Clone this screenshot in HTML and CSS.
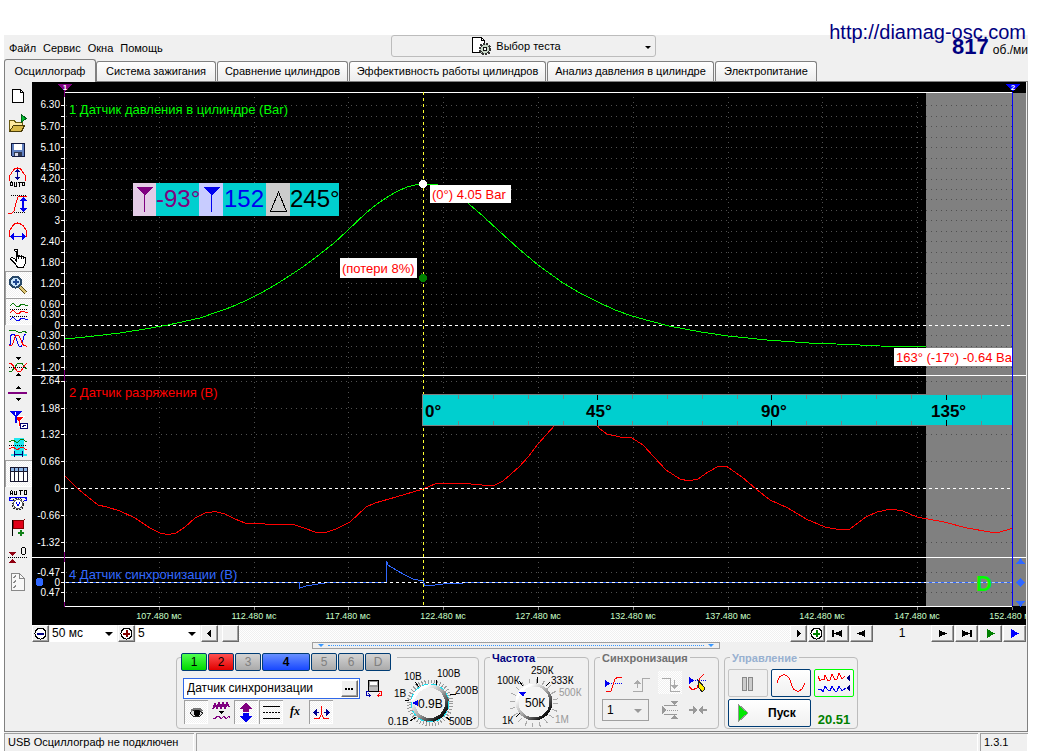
FILE: index.html
```html
<!DOCTYPE html>
<html lang="ru">
<head>
<meta charset="utf-8">
<title>Осциллограф</title>
<link rel="stylesheet" href="styles.css">
</head>
<body>
<div class="app">
  <a class="site-link" href="#">http://diamag-osc.com</a>
  <header class="header">
    <nav class="menu">
      <a href="#">Файл</a><a href="#">Сервис</a><a href="#">Окна</a><a href="#">Помощь</a>
    </nav>
    <button class="test-picker">
      <svg width="21" height="20" viewBox="0 0 21 20"><path d="M1.500 1.500h9l3 3v12h-12z" fill="#fff" stroke="#000"/><path d="M10.500 1.500v3h3" fill="none" stroke="#000"/><circle cx="14" cy="13" r="5" fill="#b8ccb8" stroke="#333" stroke-width="3" stroke-dasharray="2 1"/><circle cx="14" cy="13" r="4" fill="#c8d8c8"/><circle cx="14" cy="13" r="2" fill="#fff" stroke="#111"/></svg>
      <span>Выбор теста</span><i class="caret"></i>
    </button>
    <div class="rpm"><b>817</b><span>об./ми</span></div>
  </header>

  <div class="tabs" role="tablist">
    <button class="tab tab-active" role="tab">Осциллограф</button>
    <button class="tab tab-w120" role="tab">Система зажигания</button>
    <button class="tab tab-w130" role="tab">Сравнение цилиндров</button>
    <button class="tab tab-w197" role="tab">Эффективность работы цилиндров</button>
    <button class="tab tab-w167" role="tab">Анализ давления в цилиндре</button>
    <button class="tab tab-w102" role="tab">Электропитание</button>
  </div>

  <main class="page">
    <div class="workspace">
      <aside class="tools">
        <button aria-label="Новый"><svg viewBox="0 0 24 24"><path d="M6.500 5.500h8l3 3v10h-11z" fill="#fff" stroke="#000"/><path d="M14.500 5.500v3h3" fill="none" stroke="#000"/></svg></button>
        <button aria-label="Открыть"><svg viewBox="0 0 24 24"><path d="M3.500 20.500v-11h5l1 2h7v3" fill="#ffe9a0" stroke="#6b5a10"/><path d="M3.500 20.500l4-6h11l-3 6z" fill="#d8b848" stroke="#4a3c08"/><path d="M15 3l5 4.500-5 4.500z" fill="#00c030" stroke="#006018"/></svg></button>
        <button aria-label="Сохранить"><svg viewBox="0 0 24 24"><path d="M5.500 5.500h13v13h-12l-1-1z" fill="#6080c0" stroke="#101840"/><path d="M8 6h8v6H8z" fill="#fff"/><path d="M8 14h8v4H8z" fill="#303850"/><path d="M9 15h3v3H9z" fill="#d8d8e8"/></svg></button>
        <button aria-label="Авто по вертикали"><svg viewBox="0 0 24 24"><path d="M3.500 16v-5l2-3 3-4 3-1 3 1 3 4 2 3v5" fill="none" stroke="red" stroke-width="1"/><path d="M11.500 5v9" stroke="#000090"/><path d="M9 7l2.500-3L14 7zM9 12l2.500 3 2.500-3z" fill="#000090"/><path d="M4.500 21v-3l1-1 1 1v3m-2-1h2m2-3v4h2v-4m1 .5h4m-2 0v4m3-4h2v3h-2z" fill="none" stroke="#000"/></svg></button>
        <button aria-label="Масштаб по вертикали"><svg viewBox="0 0 24 24"><path d="M2 21h4l2-2 2-8 2-6 3-1 6 1" fill="none" stroke="red"/><path d="M5 3.500h15M8 20.500h12" stroke="#000" stroke-dasharray="1 1"/><path d="M17 7v10" stroke="#0000f0" stroke-width="2"/><path d="M13 9l4-4 4 4zM13 16l4 4 4-4z" fill="#0000f0"/></svg></button>
        <button aria-label="Масштаб по горизонтали"><svg viewBox="0 0 24 24"><path d="M3.500 18V12l3-5 2-2 3-1 3 1 3 2 3 5v6" fill="none" stroke="red"/><path d="M6 17.500h12" stroke="#0000f0"/><path d="M8 14l-4 3.500L8 21zM16 14l4 3.500-4 3.500z" fill="#0000f0"/></svg></button>
        <button aria-label="Рука"><svg viewBox="0 0 24 24"><path d="M10.500 14V4.500h-1l-1-1V3l1-1h1l1 1V9l1-.5 2 1 1-.5 2 1 2 1v5l-2 4h-6l-3-4-4-4 1-1.500 3 1z" transform="translate(0 1)" fill="#fff" stroke="#000"/><path d="M12.500 10v3m2.500-3v3m2.500-2v2" stroke="#000"/></svg></button>
        <button class="pressed" aria-label="Лупа"><svg viewBox="0 0 24 24"><path d="M13 13l7 7" stroke="#5a4a10" stroke-width="4"/><path d="M14 14l6 6" stroke="#e0c878" stroke-width="2"/><circle cx="9.500" cy="9" r="5.500" fill="#c8e4fa" stroke="#284868" stroke-width="2"/><path d="M6.500 9h6M9.500 6v6" stroke="#204890" stroke-width="2"/></svg></button>
        <button class="pressed" aria-label="Раздельно"><svg viewBox="0 0 24 24"><path d="M4 6c2-3 4-3 6 0 3 3 4-2 6-2s3 2 6 2" fill="none" stroke="#087808"/><path d="M4 13c2-3 4-3 6 0 3 3 4-2 6-2s3 2 6 2" fill="none" stroke="red"/><path d="M4 20c2-3 4-3 6 0 3 3 4-2 6-2s3 2 6 2" fill="none" stroke="#0000f0"/><path d="M4 9.500h18M4 16.500h18" stroke="#000" stroke-dasharray="1 1"/></svg></button>
        <button aria-label="Наложение"><svg viewBox="0 0 24 24"><path d="M3 4c3 0 3-1 5-1 3 0 5 5 8 2 2-1 4 0 5 1" fill="none" stroke="#087808"/><path d="M4 19c0-6 0-12 3-12 4 0 4 13 7 13 4 0 2-13 6-13" fill="none" stroke="#0000f0"/><path d="M3 18c6 3 4-10 8-10 5 0 3 12 10 11" fill="none" stroke="red"/></svg></button>
        <button aria-label="Центрировать"><svg viewBox="0 0 24 24"><path d="M3 17h3l6-8h4l3 5 2 1" fill="none" stroke="#087808"/><path d="M3 9h2l6 8h4l4-6 2-2" fill="none" stroke="red"/><path d="M3 13.500h18" stroke="#000" stroke-dasharray="1 1"/><path d="M9 3h6l-3 3zM9 22h6l-3-3z" fill="#000"/></svg></button>
        <button aria-label="Разделитель"><svg viewBox="0 0 24 24"><path d="M2 12h19" stroke="#800080" stroke-width="2"/><path d="M9 8h6l-3-3zM9 17h6l-3 3z" fill="#000"/></svg></button>
        <button aria-label="Маркеры"><svg viewBox="0 0 24 24"><path d="M8 8h11l-5 5v5h-2v-5z" fill="red" stroke="#fff"/><path d="M3 3h13l-5 5v7H9V8z" fill="#0000f0"/><path d="M9.500 4v3" stroke="#fff"/><path d="M14.500 15.500h7v5h-7z" fill="#fff" stroke="#000070"/><path d="M16 18.500h1l1-1h2" stroke="#000070" fill="none"/></svg></button>
        <button aria-label="Область"><svg viewBox="0 0 24 24"><path d="M8 3h10v16h3v2H5v-2h3z" fill="#20e8f0"/><path d="M3 7c3-2 5-2 7 0s4-3 6-3 3 3 5 3" fill="none" stroke="#087808"/><path d="M3 10.500h18" stroke="#000" stroke-dasharray="1 1"/><path d="M3 14c3-2 5-2 7 0s4-2 6-2 3 3 5 3" fill="none" stroke="red"/><path d="M8.500 16v6m8-6v6m-8-3h8" stroke="#000070" stroke-width="1" fill="none"/></svg></button>
        <button class="pressed" aria-label="Таблица"><svg viewBox="0 0 24 24"><path d="M4.500 5.500h17v14h-17z" fill="#fff" stroke="#181830"/><path d="M5 6h16v3H5z" fill="#90b8e8"/><path d="M4 9.500h17M8.500 6v13m4-13v13m5-13v13" stroke="#181830"/></svg></button>
        <button aria-label="Авто вольтметр"><svg viewBox="0 0 24 24"><path d="M4.500 6V2.500l1-1 1 1V6m-2-1.500h2m2-3v4h2v-4m2 0h4m-2 0v4m4-4h2v4h-2z" fill="none" stroke="#000"/><path d="M3 10l3-2h12l3 2M3.500 8v3h3m14-3v3h-3" fill="none" stroke="#0000f0"/><circle cx="12" cy="15" r="6" fill="#eee" stroke="#222" stroke-dasharray="2 1"/><circle cx="12" cy="15" r="4.500" fill="#fff" stroke="#555"/><path d="M10 13l2 4 2-4" fill="none" stroke="#0000f0"/></svg></button>
        <button aria-label="Флаг"><svg viewBox="0 0 24 24"><path d="M6.500 4v16" stroke="#000"/><path d="M7 5l4-1 3 1 4-1-1 3 1 5-4 1-3-1-4 1z" fill="#e00018" stroke="#800000"/><path d="M12 17h6M15 14v6" stroke="#108018" stroke-width="2"/></svg></button>
        <button aria-label="Ноль"><svg viewBox="0 0 24 24"><path d="M3 9h7l-3.500 4zM3 20h7l-3.500-4z" fill="#900010"/><path d="M2 14.500h20" stroke="#000" stroke-dasharray="1 1"/><path d="M16.500 4.500h2l1 1v5l-1 1h-2l-1-1v-5z" fill="none" stroke="#000"/></svg></button>
        <button aria-label="Отчёт"><svg viewBox="0 0 24 24"><path d="M5.500 3.500h8l5 5v12h-13z" fill="#f8f8f8" stroke="#888"/><path d="M13.500 3.500v5h5M7 7l1 1 2-3M7 12l1 1 2-3M7 17l1 1 2-3" fill="none" stroke="#888"/></svg></button>
      </aside>

      <div class="content">
        <svg class="scope" viewBox="32 82 994 543">
          <rect x="32" y="82" width="994" height="543"/>
          <rect x="926" y="93" width="100" height="513" fill="#808080"/>
          <g class="grid">
            <path d="M66 105.500H1012M66 116.500H1012M66 126.500H1012M66 137.500H1012M66 147.500H1012M66 158.500H1012M66 168.500H1012M66 179.500H1012M66 189.500H1012M66 199.500H1012M66 210.500H1012M66 220.500H1012M66 231.500H1012M66 241.500H1012M66 252.500H1012M66 262.500H1012M66 273.500H1012M66 283.500H1012M66 294.500H1012M66 304.500H1012M66 315.500H1012M66 335.500H1012M66 346.500H1012M66 356.500H1012M66 367.500H1012"/>
            <path d="M66 381.500H1012M66 408.500H1012M66 434.500H1012M66 461.500H1012M66 515.500H1012M66 542.500H1012M66 572.500H1012M66 592.500H1012"/>
            <path d="M159.500 97V606M254.500 97V606M348.500 97V606M443.500 97V606M538.500 97V606M633.500 97V606M728.500 97V606M822.500 97V606M917.500 97V606"/>
          </g>
          <g class="ticks">
            <path d="M61 105.500h4M61 116.500h4M61 126.500h4M61 137.500h4M61 147.500h4M61 158.500h4M61 168.500h4M61 179.500h4M61 189.500h4M61 199.500h4M61 210.500h4M61 220.500h4M61 231.500h4M61 241.500h4M61 252.500h4M61 262.500h4M61 273.500h4M61 283.500h4M61 294.500h4M61 304.500h4M61 315.500h4M61 325.500h4M61 335.500h4M61 346.500h4M61 356.500h4M61 367.500h4M61 381.500h4M61 408.500h4M61 434.500h4M61 461.500h4M61 488.500h4M61 515.500h4M61 542.500h4M61 572.500h4M61 582.500h4M61 592.500h4"/>
            <path d="M64.500 92V606M64 92.500H1012M32 375.500H1026M32 557.500H1026M64 606.500H1012"/>
          </g>
          <path d="M159.500 607v3M254.500 607v3M348.500 607v3M443.500 607v3M538.500 607v3M633.500 607v3M728.500 607v3M822.500 607v3M917.500 607v3M1012.500 607v3" stroke="#888"/>
          <path class="zero" d="M65 325.500H1012M65 488.500H1012"/>
          <path d="M64.500 88v9M64.500 370v11M64.500 552v10M64.500 602v5" stroke="#800080"/>
          <g class="y-labels">
            <text x="60" y="108">6.30</text><text x="60" y="130">5.70</text><text x="60" y="151">5.10</text><text x="60" y="171">4.50</text><text x="60" y="182">4.20</text><text x="60" y="203">3.60</text><text x="60" y="224">3</text><text x="60" y="245">2.40</text><text x="60" y="266">1.80</text><text x="60" y="287">1.20</text><text x="60" y="308">0.60</text><text x="60" y="318">0.30</text><text x="60" y="329">0</text><text x="60" y="339">-0.30</text><text x="60" y="350">-0.60</text><text x="60" y="371">-1.20</text>
            <text x="60" y="384">2.64</text><text x="60" y="412">1.98</text><text x="60" y="438">1.32</text><text x="60" y="465">0.66</text><text x="60" y="492">0</text><text x="60" y="519">-0.66</text><text x="60" y="546">-1.32</text>
            <text x="60" y="576">-0.47</text><text x="60" y="586">0</text><text x="60" y="596">0.47</text>
          </g>
          <g class="x-labels">
            <text x="159" y="619">107.480 мс</text><text x="254" y="619">112.480 мс</text><text x="348" y="619">117.480 мс</text><text x="443" y="619">122.480 мс</text><text x="538" y="619">127.480 мс</text><text x="633" y="619">132.480 мс</text><text x="728" y="619">137.480 мс</text><text x="822" y="619">142.480 мс</text><text x="917" y="619">147.480 мс</text><text x="1012" y="619">152.480 мс</text>
          </g>
          <g class="channel">
            <text x="69" y="114" fill="#00ff00">1 Датчик давления в цилиндре (Bar)</text>
            <text x="69" y="397" fill="#ff0000">2 Датчик разряжения (В)</text>
            <text x="69" y="579" fill="#3068ff">4 Датчик синхронизации (В)</text>
          </g>

          <path class="wave" stroke="#00ff00" d="M65 338.500L75 338 90 336.500 120 333 145 329 168 325 200 318 230 307.500 245 301 260 293.500 275 285 290 275.500 305 265.500 320 254 334 243 347 231 366 213 377 204 389 196 398 191 407 187 415 185 423 184 438 185 452 190 469 204 484 217 499 231 519 249 538 265 563 283 580 293 598 302 615 310 632 316 650 321 669 326 701 332 728 336 767 340 809 343 850 344.500 880 346 926 347"/>
          <path class="wave" stroke="#ff0000" d="M65 476L78 489 98 505 107 507 120 511 135 518 150 528 160 533 168 534.500 176 533 185 527 195 518 205 513 215 511.500 225 514 235 519 245 523 265 524 292 524 304 528 315 532 327 532 336 529 350 522 366 507 375 503 396 497 423 489 435 484 446 483 471 484 493 486 503 481 519 467 529 456 538 444 546 435 556 424H596L600 429 607 434 620 437 632 438 643 445 654 457 666 470 680 479 689 481 698 479 708 472 719 466 726 466 742 477 756 489 770 500 788 508 806 519 825 527 841 530 850 529 866 517 877 512 891 509 903 511 917 517 944 522 967 528 990 532 1000 532 1012 528.500"/>
          <path class="wave" stroke="#3068ff" d="M65 582.500H299.500V588L306 586 318 584 325 583 353 582.500H386.500V561L388 565 396 570 405 575 413 579 423 581 425 586 435 585 447 583.500 480 582.500H1012"/>
          <path class="zero" d="M66 582.500H926"/>
          <path d="M926 582.500H1012" stroke="#b0c8ff" stroke-dasharray="3 3"/>
          <path d="M423.500 92V606" stroke="#ffff30" stroke-dasharray="3 3"/>
          <circle cx="423" cy="184" r="4" fill="#fff"/><circle cx="423" cy="278" r="4" fill="#008000"/>

          <rect x="133" y="183" width="23" height="33" fill="#e4cce6"/><rect x="156" y="183" width="183" height="33" fill="#00cfcf"/>
          <rect x="199" y="183" width="24" height="33" fill="#c8ccff"/><rect x="266" y="183" width="24" height="33" fill="#ccc"/>
          <path d="M136 187h17l-8 8v17h-1v-17z" fill="#800080"/><path d="M203 187h17l-8 8v17h-1v-17z" fill="#0000f0"/><path d="M270.500 211.500h16L278.500 192z" fill="none" stroke="#000"/>
          <svg x="156" y="183" width="43" height="33" class="readout"><text x="0" y="24" fill="#800080">-93°</text></svg>
          <svg x="223" y="183" width="43" height="33" class="readout"><text x="1" y="24" fill="#0000f0">152</text></svg>
          <svg x="290" y="183" width="49" height="33" class="readout"><text x="0" y="24" fill="#000">245°</text></svg>

          <g class="callout">
            <rect x="430" y="185" width="81" height="18"/><text x="432" y="199">(0°) 4.05 Bar</text>
            <rect x="340" y="258" width="77" height="20"/><text x="342" y="273">(потери 8%)</text>
            <rect x="894" y="348" width="118" height="18"/><svg x="894" y="348" width="118" height="18"><text x="2" y="14">163° (-17°) -0.64 Bar</text></svg>
          </g>

          <rect x="422" y="394" width="590" height="32" fill="#808080"/><rect x="423" y="395" width="589" height="30" fill="#00cfcf"/>
          <path d="M458.500 395v4m0 22v4M493.500 395v4m0 22v4M528.500 395v4m0 22v4M563.500 395v4m0 22v4M632.500 395v4m0 22v4M667.500 395v4m0 22v4M702.500 395v4m0 22v4M737.500 395v4m0 22v4M806.500 395v4m0 22v4M841.500 395v4m0 22v4M876.500 395v4m0 22v4M911.500 395v4m0 22v4M981.500 395v4m0 22v4" stroke="#708888"/>
          <path d="M597.500 395v5m0 20v6M771.500 395v5m0 20v6M946.500 395v5m0 20v6" stroke="#000"/>
          <g class="degrees"><text x="425" y="417">0°</text><text x="586" y="417">45°</text><text x="761" y="417">90°</text><text x="931" y="417">135°</text></g>

          <text x="976" y="591" class="digital">D</text>
          <path d="M1012.500 92V606" stroke="#0000ff"/>
          <path d="M57 84h15l-7 8z" fill="#800080"/><path d="M1005 84h15l-7 8z" fill="#0000ff"/>
          <g class="marker"><text x="65" y="90">1</text><text x="1013" y="90">2</text></g>
          <path d="M1016 564h9l-4.500-6zM1016 601h9l-4.500 6zM1016 582.500l4.500-4.500 4.500 4.500-4.500 4.500z" fill="#3068ff"/>
          <circle cx="39.500" cy="582" r="4" fill="#3068ff"/>
        </svg>

        <div class="timebar">
          <button class="raised zoom-btn" aria-label="Уменьшить"><svg viewBox="1 1 15 15"><circle cx="8.500" cy="8.500" r="5.500" fill="#fff" stroke="#000"/><path d="M5 8.500h7" stroke="#000080" stroke-width="2"/></svg></button>
          <label class="pick pick-time"><select aria-label="Развёртка"><option>50 мс</option></select></label>
          <button class="raised zoom-btn" aria-label="Увеличить"><svg viewBox="1 1 15 15"><circle cx="8.500" cy="8.500" r="5.500" fill="#fff" stroke="#000"/><path d="M5 8.500h7M8.500 5v7" stroke="#800000" stroke-width="2"/></svg></button>
          <label class="pick pick-scale"><select aria-label="Масштаб"><option>5</option></select></label>
          <div class="scrollbar">
            <button class="raised end" aria-label="Влево"><svg viewBox="1 1 15 15"><path d="M10 4v9L6 8.500z"/></svg></button>
            <button class="raised thumb" aria-label="Ползунок"></button>
            <span class="track"></span>
            <button class="raised end" aria-label="Вправо"><svg viewBox="1 1 15 15"><path d="M7 4v9l4-4.500z"/></svg></button>
          </div>
          <button class="raised end" aria-label="Добавить"><svg viewBox="1 1 15 15"><circle cx="8.500" cy="8.500" r="5.500" fill="#fff" stroke="#000"/><path d="M5 8.500h7M8.500 5v7" stroke="#008000" stroke-width="2"/></svg></button>
          <button class="raised step" aria-label="Первый"><svg viewBox="1 1 21 15"><path d="M6 5h2v7H6zM16 5v7L8 8.500z"/></svg></button>
          <button class="raised step" aria-label="Назад"><svg viewBox="1 1 21 15"><path d="M15 5v7L7 8.500z"/></svg></button>
          <output class="frame-no">1</output>
          <button class="raised step" aria-label="Вперёд"><svg viewBox="1 1 21 15"><path d="M8 5v7l8-3.500z"/></svg></button>
          <button class="raised step" aria-label="Последний"><svg viewBox="1 1 21 15"><path d="M7 5v7l8-3.500zM15 5h2v7h-2z"/></svg></button>
          <button class="raised step" aria-label="Воспроизвести"><svg viewBox="1 1 21 15"><path d="M8 4v9l8-4.500z" fill="#008000"/></svg></button>
          <button class="raised step" aria-label="Воспроизвести всё"><svg viewBox="1 1 21 15"><path d="M8 4v9l8-4.500z" fill="#0000ff"/></svg></button>
        </div>
      </div>
    </div>

    <div class="splitter"><i></i><span></span><i></i></div>

    <div class="panels">
      <section class="panel panel-channel">
        <div class="channel-col">
          <div class="channel-tabs">
            <button class="ch ch-green">1</button><button class="ch ch-red">2</button><button class="ch">3</button><button class="ch ch-blue">4</button><button class="ch">5</button><button class="ch">6</button><button class="ch">D</button>
          </div>
          <div class="sensor-row">
            <div class="sensor"><input type="text" value="Датчик синхронизации" aria-label="Датчик"><button class="raised" aria-label="Выбрать датчик"><svg width="15" height="15" viewBox="0 0 15 15"><path d="M3 7h2v2H3zM6 7h2v2H6zM9 7h2v2H9z"/></svg></button></div>
            <button class="flat" aria-label="Обмен"><svg width="20" height="20" viewBox="0 0 20 20"><path d="M4.500 1.500h10v11h-10z" fill="#999" stroke="#000" stroke-width="1"/><path d="M6 3h7v3H6z" fill="#fff"/><path d="M5 8h9v4H5z" fill="#bbb"/><path d="M5 12.500H2.500v4h4m-2-2l2 2-2 2" fill="none" stroke="#0000b0"/><path d="M15 12.500h2.500v4h-4m2-2l-2 2 2 2" fill="none" stroke="red"/></svg></button>
          </div>
          <div class="channel-tools">
            <button class="pressed" aria-label="Видимость"><svg viewBox="0 0 24 24"><path d="M6 13l3-3h6l4 3-3 3H9z" fill="#ddd" stroke="#222"/><path d="M7 9l3-1h6l3 2-1 2-3-2h-5l-3 2z" fill="#777"/><circle cx="13" cy="13" r="3" fill="#000"/></svg></button>
            <button aria-label="Фильтр"><svg viewBox="0 0 24 24"><path d="M4 9l2-5 2 4 2-5 2 5 2-5 2 5 2-5 2 4" fill="none" stroke="#800080" stroke-width="2"/><path d="M9 11h6l-3 3z" fill="#000"/><path d="M4 18l2 1 2-3h2l2 3 3-3 2 3 3-3 1 2" fill="none" stroke="#800080"/></svg></button>
            <button class="pressed" aria-label="Инверсия"><svg viewBox="0 0 24 24"><path d="M12 3l7 6h-4v3H9V9H5z" fill="#800080"/><path d="M9 13h6v3h4l-7 6-7-6h4z" fill="#0000f0"/></svg></button>
            <button class="pressed" aria-label="Границы"><svg viewBox="0 0 24 24"><path d="M4 6.500h17M4 18.500h17" stroke="#000"/><path d="M4 12.500h17" stroke="#000" stroke-dasharray="2 1"/></svg></button>
            <button aria-label="Функция"><svg viewBox="0 0 24 24"><text x="6" y="15" class="fx">fx</text></svg></button>
            <button class="pressed" aria-label="Сдвиг"><svg viewBox="0 0 24 24"><path d="M5 18.500h5l2.500-4 2.500 4h5" fill="none" stroke="red"/><path d="M12.500 6v9" stroke="red"/><path d="M6 12.500h4m5 0h4" stroke="#000090"/><path d="M8 9v7l-4-3.500zM17 9v7l4-3.500z" fill="#000090"/></svg></button>
          </div>
        </div>
        <svg class="dial" width="93" height="71" viewBox="385 657 93 71">
          <defs><linearGradient id="metal" x1="0" y1="0" x2="1" y2="1"><stop offset=".2" stop-color="#fff"/><stop offset=".5" stop-color="#aaa"/><stop offset=".85" stop-color="#111"/></linearGradient></defs>
          <circle cx="430" cy="702" r="21" fill="none" stroke="#999" stroke-width="5" stroke-dasharray="1 2"/>
          <circle cx="430" cy="702" r="17" fill="#f0f0f0" stroke="url(#metal)" stroke-width="4"/><circle cx="430" cy="702" r="19" fill="none" stroke="#20e0f0" stroke-dasharray="6 3"/>
          <path d="M405 699h4M415 681l4 5M436 684l1-5M450 694l6-1M446 716l4 3M410 720l6-4" stroke="#000"/>
          <path d="M418 699v6l-6-3z" fill="#0000f0"/>
          <text x="404" y="679">10В</text><text x="437" y="676">100В</text><text x="394" y="696">1В</text><text x="455" y="693">200В</text><text x="388" y="724">0.1В</text><text x="449" y="724">500В</text><text x="418" y="707" class="dial-value">0.9В</text>
        </svg>
      </section>

      <section class="panel panel-rate">
        <h2 class="navy">Частота</h2>
        <svg class="dial" width="103" height="62" viewBox="484 665 103 62">
          <circle cx="533" cy="703" r="22" fill="none" stroke="#aaa" stroke-width="5" stroke-dasharray="1 6"/>
          <circle cx="533" cy="702" r="17" fill="#f4f4f4" stroke="url(#metal)" stroke-width="3"/>
          <path d="M536.500 677v6M518 681l4 5M545 686l4-4M515 717l4-4" stroke="#000"/>
          <path d="M518 692h7l-3 5z" fill="#0000f0"/>
          <text x="530" y="674">250К</text><text x="496" y="684">100К</text><text x="550" y="684">333К</text><text x="558" y="696" fill="#999">500К</text><text x="501" y="724">1К</text><text x="554" y="723" fill="#999">1М</text><text x="524" y="707" class="dial-value">50К</text>
        </svg>
      </section>

      <section class="panel panel-sync">
        <h2 class="gray">Синхронизация</h2>
        <div class="sync-grid">
          <button class="flat" aria-label="Запуск"><svg viewBox="0 0 24 22"><path d="M3 8v7l5-3.500z" fill="#0000f0"/><path d="M7 11.500h13" stroke="#0000f0" stroke-dasharray="1 1"/><path d="M4 19l2 1 3-1 4-12 3-2h4" fill="none" stroke="red"/></svg></button>
          <button class="flat" aria-label="Фронт"><svg viewBox="0 0 24 22"><path d="M3 19.500h9.500v-13H20" fill="none" stroke="#aaa"/><path d="M7.500 9v7" stroke="#aaa"/><path d="M4 12h7L7.500 8z" fill="#aaa"/></svg></button>
          <button class="flat selected" aria-label="Спад"><svg viewBox="0 0 24 22"><path d="M4 6.500h8.500v13H22" fill="none" stroke="#aaa"/><path d="M16.500 8v7" stroke="#aaa"/><path d="M13 13h7l-3.500 4z" fill="#aaa"/></svg></button>
          <button class="flat" aria-label="Ручной"><svg viewBox="0 0 24 22"><path d="M3 5v7l5-3.500z" fill="#0000f0"/><path d="M7 8.500h14" stroke="#0000f0" stroke-dasharray="1 1"/><path d="M3 14l3 4 5-2 3-10 4-4" fill="none" stroke="red"/><path d="M12 8l6 7v3l-2 2-3-4z" fill="#ffee00" stroke="#222"/></svg></button>
          <label class="sync-pick"><select aria-label="Канал" disabled><option>1</option></select></label>
          <button class="flat" aria-label="Уровень"><svg viewBox="0 0 24 22"><path d="M4 7v8l5-4zM13 2h7l-3.500 4zM13 20h7l-3.500-4z" fill="#999"/><path d="M6 6.500h13M6 15.500h13" stroke="#999"/><path d="M9 11.500h12" stroke="#999" stroke-dasharray="1 1"/></svg></button>
          <button class="flat" aria-label="Сжать"><svg viewBox="0 0 24 22"><path d="M3 11h5m8 0h5" stroke="#999" stroke-width="2"/><path d="M7 7v8l5-4zM17 7v8l-5-4z" fill="#999"/></svg></button>
        </div>
      </section>

      <section class="panel panel-run">
        <h2 class="steel">Управление</h2>
        <div class="run-grid">
          <button class="run disabled" aria-label="Пауза"><svg viewBox="0 0 40 28"><path d="M14.500 8.500h4v13h-4zM20.500 8.500h4v13h-4z" fill="#ccc" stroke="#888"/></svg></button>
          <button class="run" aria-label="Синус"><svg viewBox="0 0 40 28"><path d="M6 14c3-11 11-11 14 0s10 11 14 0" fill="none" stroke="red"/></svg></button>
          <button class="run lime" aria-label="Потоки"><svg viewBox="0 0 40 28"><path d="M4 7l2 5 2-2 2 1 1-5 3 6 2-1 2-6 3 6 2-1 2-6 3 6 3-3" fill="none" stroke="red"/><path d="M4 20h3l2 3 2-6 3 4 2 1 2-5 3 5h2l2-5 3 5 4-3" fill="none" stroke="#0000f0"/><path d="M36 6v6l-4-3zM36 16v6l-4-3z" fill="#000080"/></svg></button>
          <button class="run start"><svg width="13" height="20" viewBox="0 0 13 20"><path d="M1 1l10 9-10 9z" fill="#00e800" stroke="#909890"/></svg><span>Пуск</span></button>
          <output class="version">20.51</output>
        </div>
      </section>
    </div>
  </main>

  <footer class="status">
    <span class="cell cell-device">USB Осциллограф не подключен</span><span class="cell cell-fill"></span><span class="cell cell-ver">1.3.1</span>
  </footer>
</div>
</body>
</html>
```
FILE: styles.css
```css
* { box-sizing: border-box; }
body { margin: 0; background: #fff; color: #000; font: 11px/13px "Liberation Sans", Arial, sans-serif; }
button, input, select, output { font: inherit; color: inherit; }
button { margin: 0; padding: 0; border: 0; background: none; }
a { color: inherit; text-decoration: none; }
svg { display: block; shape-rendering: crispEdges; }
.app { position: relative; margin: 35px 12px 4px 4px; background: #f0f0f0; }
.site-link { position: absolute; z-index: 2; right: 2px; top: -15px; color: #000080; font-size: 20px; line-height: 24px; }

/* header */
.header { display: flex; height: 24px; align-items: center; overflow: hidden; }
.menu { display: flex; gap: 7px; flex: 0 0 387px; padding: 2px 0 0 5px; }
.test-picker { display: flex; flex: 0 0 265px; align-self: flex-start; align-items: center; justify-content: center; gap: 4px; position: relative; height: 22px; padding-right: 15px; border: 1px solid #bcbcbc; border-radius: 3px; }
.caret { position: absolute; right: 4px; top: 10px; border: 3px solid transparent; border-top-color: #000; border-bottom: 0; }
.rpm { display: flex; margin-left: auto; gap: 4px; align-items: baseline; white-space: nowrap; }
.rpm b { color: #000080; font-size: 22px; line-height: 24px; }
.rpm span { font-size: 12px; }

/* tabs */
.tabs { display: flex; height: 22px; align-items: flex-end; gap: 1px; }
.tab { height: 20px; border: 1px solid #808080; border-bottom: 0; border-radius: 3px 3px 0 0; background: linear-gradient(#fff, #ececec); white-space: nowrap; }
.tab-active { width: 92px; height: 23px; margin: 0 -1px -1px 0; background: #f0f0f0; position: relative; }
.tab-w120 { width: 120px; }
.tab-w130 { width: 131px; }
.tab-w197 { width: 197px; }
.tab-w167 { width: 167px; }
.tab-w102 { width: 102px; }

.page { border: 1px solid #808080; padding-bottom: 2px; }
.workspace { display: flex; padding-right: 1px; }
.tools { flex: 0 0 27px; display: grid; grid-auto-rows: 27px; align-content: start; }
.tools button { padding: 1px; border: 0; }
.tools svg { width: 24px; height: 24px; }
.content { flex: 1; min-width: 0; }
.pressed, .track, .selected { background-color: #f0f0f0; background-image: conic-gradient(#fff 25%, transparent 0 50%, #fff 0 75%, transparent 0); background-size: 2px 2px; }
.pressed { box-shadow: inset 1px 1px #a0a0a0, inset -1px -1px #fff; }

/* oscilloscope */
.scope { width: 100%; height: auto; }
.scope text { font-family: "Liberation Sans", Arial, sans-serif; }
.scope .grid { stroke: #505050; stroke-dasharray: 1 4; }
.scope .ticks { stroke: #fff; }
.scope .zero { stroke: #fff; stroke-dasharray: 3 3; }
.scope .wave { fill: none; stroke-width: 1; }
.scope .y-labels { fill: #fff; font-size: 10px; text-anchor: end; }
.scope .x-labels { fill: #c8ffc8; font-size: 9px; text-anchor: middle; }
.scope .channel { font-size: 13px; }
.scope .readout { font-size: 24px; }
.scope .callout { fill: #fff; font-size: 13px; }
.scope .callout text { fill: #ff0000; }
.scope .degrees { font-size: 17px; font-weight: bold; }
.scope .digital { fill: #00ff00; font-size: 22px; font-weight: bold; }
.scope .marker { fill: #fff; font-size: 8px; font-weight: bold; text-anchor: middle; }

/* time bar */
.timebar { display: flex; height: 17px; gap: 1px; }
.raised { background: #f0f0f0; border: 1px solid #fff; border-right-color: #696969; border-bottom-color: #696969; box-shadow: inset -1px -1px #a0a0a0; }
.timebar .raised { position: relative; flex: none; height: 17px; }
.timebar svg { width: 100%; height: 15px; }
.zoom-btn, .end, .thumb { width: 17px; }
.step { width: 23px; }
.pick { position: relative; background: #fff; }
.pick select, .sync-pick select { appearance: none; width: 100%; height: 100%; margin: 0; padding: 0 2px; border: 0; background: transparent; }
.pick select { font-size: 12px; }
.pick-time { flex: 0 0 67px; }
.pick-scale { flex: 0 0 64px; }
.pick::after, .sync-pick::after { content: ""; position: absolute; right: 4px; top: 7px; border: 4px solid transparent; border-top-color: #000; border-bottom: 0; }
.scrollbar { display: flex; flex: 1; min-width: 0; }
.thumb { margin-left: 4px; }
.track { flex: 1; }
.frame-no { flex: 0 0 56px; font-size: 12px; line-height: 17px; text-align: center; }

/* splitter */
.splitter { display: flex; align-items: center; justify-content: space-between; width: 408px; height: 7px; margin: 0 auto; padding: 0 5px; border: 1px solid #a0a0a0; }
.splitter i { border: 3px solid transparent; border-top-color: #3898ff; border-bottom: 0; }
.splitter span { flex: 1; margin: 0 4px; border-top: 1px dotted #3898ff; }

/* lower panels */
.panels { display: flex; justify-content: center; gap: 5px; margin-top: 8px; padding-left: 2px; }
.panel { height: 72px; border: 1px solid #bcbcbc; border-radius: 4px; }
.panel h2 { display: table; margin: -6px 0 0 5px; padding: 0 2px; background: #f0f0f0; font-size: 11px; line-height: 13px; }
.panel .navy { color: #000080; }
.panel .gray { color: #707070; }
.panel .steel { color: #98b0d0; }
.panel-channel { display: flex; width: 303px; }
.channel-col { width: 208px; padding-left: 4px; }
.channel-tabs { display: flex; gap: 1px; width: 216px; height: 18px; margin-top: -5px; padding-right: 5px; background: #f0f0f0; }
.ch { width: 26px; border: 1px solid #003c74; border-radius: 2px; background: linear-gradient(#d4d4d4, #aaa); color: #808080; font-size: 12px; }
.ch-green { background: linear-gradient(#50ff50, #00d800); color: #000; }
.ch-red { background: linear-gradient(#ff5050, #e00000); color: #000; }
.ch-blue { width: 48px; background: linear-gradient(#6890ff, #1848ff); color: #000; font-weight: bold; }
.sensor-row { display: flex; gap: 4px; margin: 7px 0 1px 2px; }
.sensor { display: flex; width: 177px; height: 21px; border: 1px solid #3068e8; background: #fff; padding: 1px; }
.sensor input { flex: 1; min-width: 0; padding: 0 2px; border: 0; outline: 0; background: transparent; font-size: 12px; }
.sensor button { width: 17px; }
.channel-tools { display: flex; gap: 1px; margin-left: 3px; }
.channel-tools button { width: 24px; height: 24px; }
.channel-tools svg { width: 24px; height: 24px; }
.fx { font: italic bold 12px "Liberation Serif", serif; }
.dial text { font-size: 10px; }
.dial .dial-value { font-size: 12px; }
.panel-rate { width: 105px; }
.panel-sync { width: 125px; }
.sync-grid { display: grid; grid-template-columns: repeat(4, 24px); grid-template-rows: 23px 22px; gap: 5px 4px; padding: 6px 0 0 7px; }
.sync-grid svg { width: 24px; height: 22px; }
.sync-pick { position: relative; grid-column: span 2; width: 47px; border: 1px solid #a0a0a0; }
.sync-pick select { padding-left: 4px; font-size: 12px; color: #000; opacity: 1; }
.sync-pick::after { top: 9px; right: 6px; border-top-color: #999; }
.panel-run { width: 134px; }
.run-grid { display: grid; grid-template-columns: 40px 40px 40px; grid-template-rows: 28px 28px; gap: 2px 3px; padding: 4px 0 0 3px; }
.run { border: 1px solid #003c74; border-radius: 2px; background: linear-gradient(#fff, #f0f0f0); }
.run svg { margin: -1px; }
.run.disabled { border-color: #c4c4c4; background: #f0f0f0; }
.run.lime { border-color: #00ff00; }
.run.start { display: flex; grid-column: span 2; align-items: center; gap: 19px; padding-left: 9px; font-size: 12px; font-weight: bold; }
.version { align-self: end; padding-bottom: 1px; color: #008000; font-size: 13px; font-weight: bold; text-align: center; }

/* status bar */
.status { display: flex; gap: 2px; margin-top: 1px; height: 18px; background: #f0f0f0; }
.cell { padding: 2px 3px; border-top: 1px solid #a0a0a0; border-left: 1px solid #a0a0a0; box-shadow: inset -1px 0 #fff; white-space: nowrap; }
.cell-device { flex: 0 0 190px; }
.cell-fill { flex: 1; }
.cell-ver { flex: 0 0 48px; }
```
